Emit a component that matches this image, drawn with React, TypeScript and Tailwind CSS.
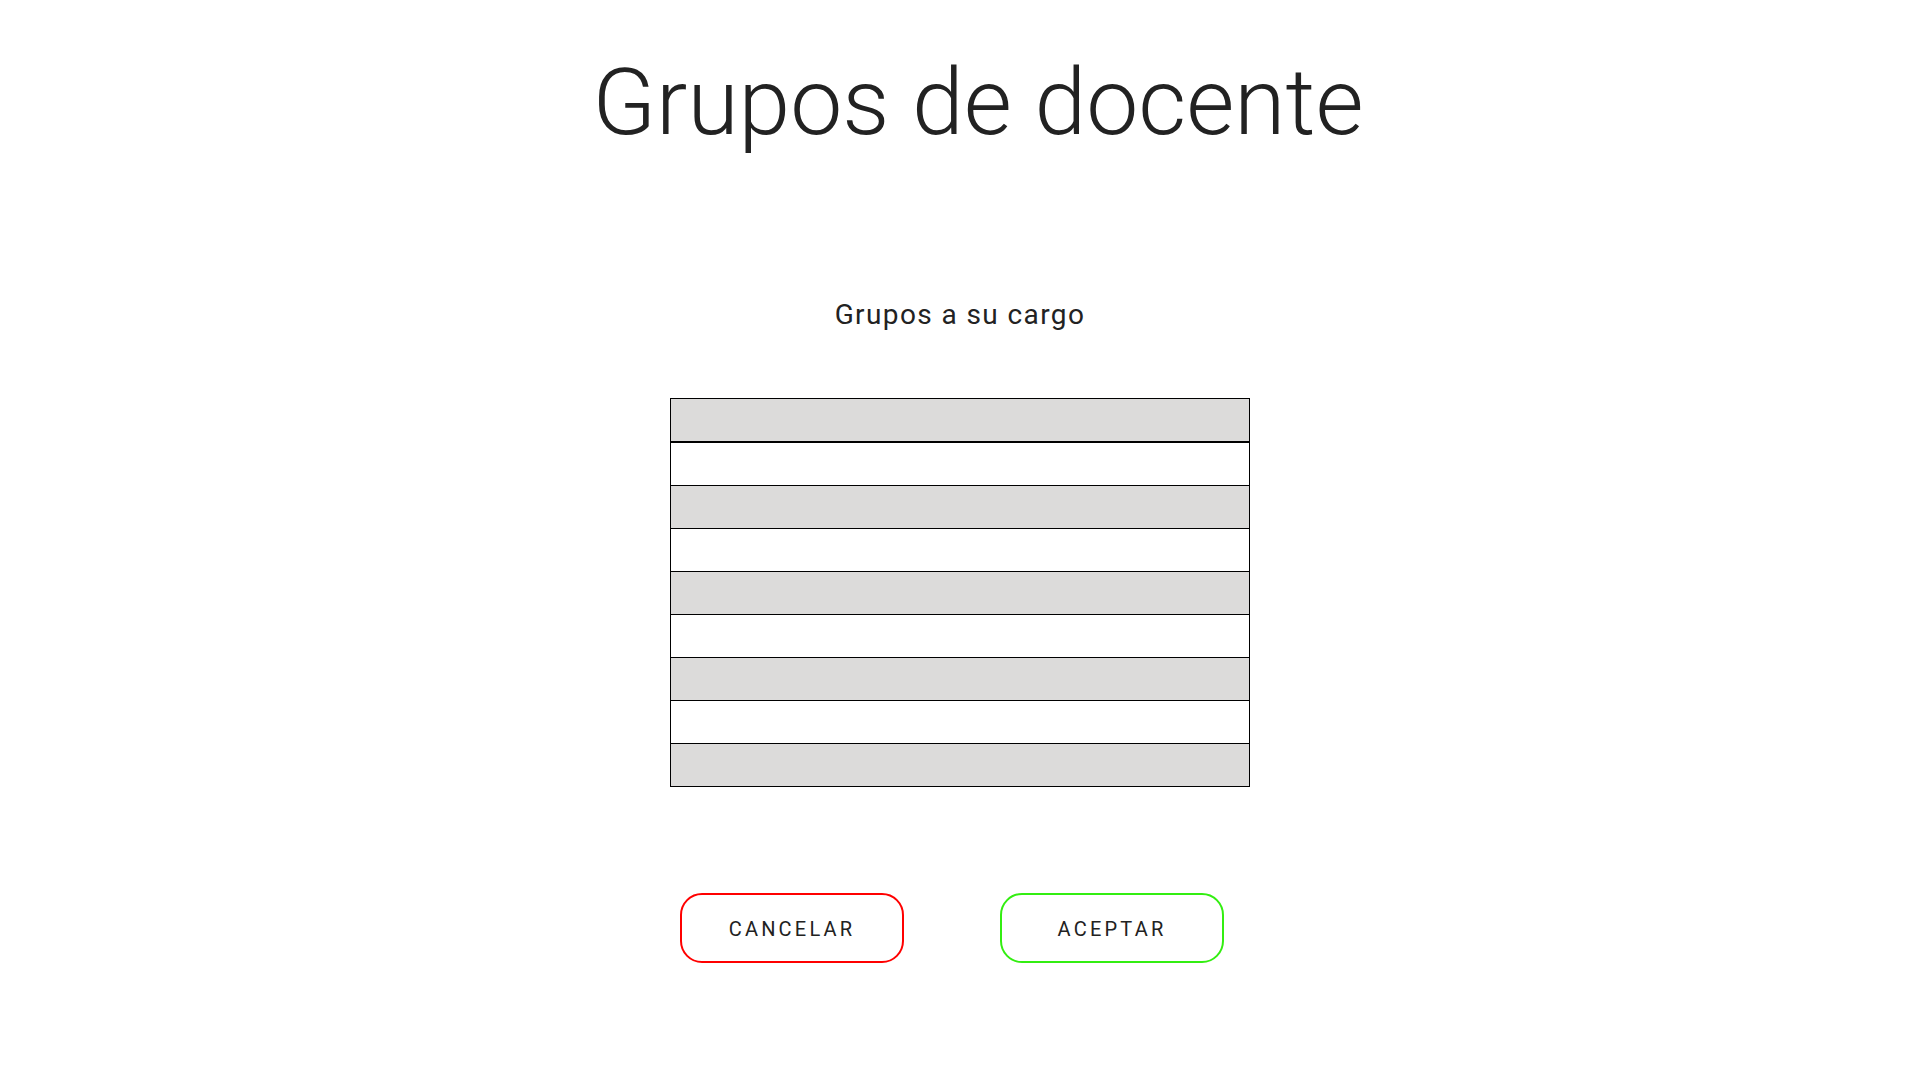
const rows = Array.from({ length: 9 }, (_, i) => i);

export default function App() {
  return (
    <div
      className="min-h-screen w-full bg-white flex flex-col items-center text-[#222]"
      style={{ fontFamily: "Roboto, 'Liberation Sans', sans-serif" }}
    >
      <h1 className="mt-[56px] pl-[36px] text-[93px] leading-none font-light">Grupos de docente</h1>

      <h2 className="mt-[152px] text-[28px] leading-none font-normal tracking-wider">Grupos a su cargo</h2>

      <div className="mt-[69px] w-[580px] border border-black">
        {rows.map((i) => (
          <div
            key={i}
            className={
              (i % 2 === 0 ? "bg-[#dcdbda] " : "bg-white ") +
              (i === 0 ? "h-[44px] border-b-2 border-black" : i === rows.length - 1 ? "h-[42px]" : "h-[43px] border-b border-black")
            }
          />
        ))}
      </div>

      <div className="mt-[106px] pr-4 flex gap-[96px]">
        <button className="w-[224px] h-[70px] pt-[2px] rounded-[22px] border-2 border-[#ff0000] bg-white text-[20px] font-normal tracking-[3.2px] text-[#222]">
          CANCELAR
        </button>
        <button className="w-[224px] h-[70px] pt-[2px] rounded-[22px] border-2 border-[#33ee11] bg-white text-[20px] font-normal tracking-[3.2px] text-[#222]">
          ACEPTAR
        </button>
      </div>
    </div>
  );
}
